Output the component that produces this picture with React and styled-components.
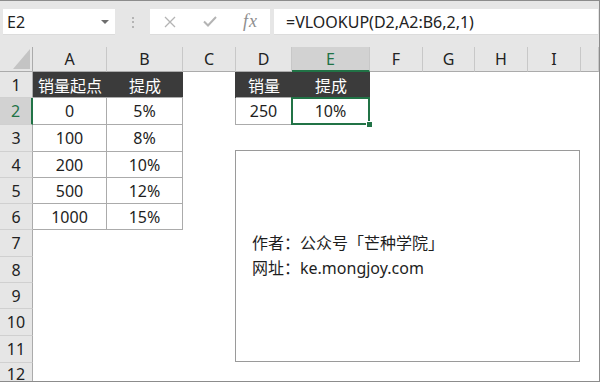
import React from 'react'
import styled, { createGlobalStyle, css } from 'styled-components'

const GlobalStyle = createGlobalStyle`
  html, body { margin:0; padding:0; background:#fff; }
  body { font-family: "Noto Sans", "Noto Sans CJK SC", sans-serif; }
  * { box-sizing: border-box; }
`

const letters = ['A', 'B', 'C', 'D', 'E', 'F', 'G', 'H', 'I', '']
const colWidths = '33px 74px 76px 53px 56px 78px 53px 52px 53px 53px 1fr'
const rowHeights = '25px 26px 27px 27px 26px 26px 26px 27px 26px 26px 27px 27px 1fr'

// row -> col -> [text, kind]
const data = {
  1: { A: ['销量起点', 'head'], B: ['提成', 'head'], D: ['销量', 'head'], E: ['提成', 'head'] },
  2: { A: ['0', 'box'], B: ['5%', 'box'], D: ['250', 'box'], E: ['10%', 'box'] },
  3: { A: ['100', 'box'], B: ['8%', 'box'] },
  4: { A: ['200', 'box'], B: ['10%', 'box'] },
  5: { A: ['500', 'box'], B: ['12%', 'box'] },
  6: { A: ['1000', 'box'], B: ['15%', 'box'] },
}

const green = '#217346'
const line = '#ababab'
const dark = '#3b3b3b'

const App = () => {
  const rows = Array.from({ length: 12 }, (_, i) => i + 1)
  return (
    <Frame>
      <GlobalStyle />
      <Toolbar>
        <NameBox>
          E2
          <Caret />
        </NameBox>
        <Grip>
          <Dot />
          <Dot />
          <Dot />
        </Grip>
        <FxButtons>
          <svg width="12" height="12" viewBox="0 0 12 12">
            <path d="M1 1L11 11M11 1L1 11" stroke="#b4b4b4" strokeWidth="1.3" fill="none" />
          </svg>
          <svg width="14" height="11" viewBox="0 0 14 11">
            <path d="M1 5.5L5 9.5L13 1" stroke="#b4b4b4" strokeWidth="2" fill="none" />
          </svg>
          <Fx>fx</Fx>
        </FxButtons>
        <FormulaInput>=VLOOKUP(D2,A2:B6,2,1)</FormulaInput>
      </Toolbar>
      <Sheet>
        <Corner>
          <svg width="17" height="20" viewBox="0 0 17 20">
            <path d="M17 0L17 20L0 20Z" fill="#c4c4c4" />
          </svg>
        </Corner>
        {letters.map((l, i) => (
          <ColHead key={i} $active={l === 'E'}>{l}</ColHead>
        ))}
        {rows.map((r) => (
          <React.Fragment key={r}>
            <RowHead $active={r === 2}>{r}</RowHead>
            {letters.map((l, i) => {
              const c = data[r] && data[r][l]
              return (
                <Cell
                  key={i}
                  $kind={c ? c[1] : undefined}
                  $edge={l === 'D' && !!c}
                  $selected={r === 2 && l === 'E'}
                >
                  {c ? c[0] : ''}
                </Cell>
              )
            })}
          </React.Fragment>
        ))}
        <TextBox>
          <div>作者：公众号「芒种学院」</div>
          <div>网址：ke.mongjoy.com</div>
        </TextBox>
      </Sheet>
    </Frame>
  )
}

export default App

const Frame = styled.div`
  width: 600px;
  height: 382px;
  overflow: hidden;
  display: flex;
  flex-direction: column;
  border-right: 1px solid #8c8c8c;
  border-bottom: 1px solid #8c8c8c;
  background: #fff;
`
const Toolbar = styled.div`
  height: 47px;
  flex: none;
  background: #e6e6e6;
  border-top: 1px solid #8c8c8c;
  display: flex;
  align-items: flex-start;
  padding: 8px 1px 0 3px;
`
const NameBox = styled.div`
  width: 112px;
  height: 26px;
  background: #fff;
  border-bottom: 1px solid #dcdcdc;
  display: flex;
  align-items: center;
  justify-content: space-between;
  padding: 0 6px 0 4px;
  font-size: 16px;
  color: #222;
`
const Caret = styled.span`
  width: 0;
  height: 0;
  border-left: 4px solid transparent;
  border-right: 4px solid transparent;
  border-top: 4px solid #6e6e6e;
`
const Grip = styled.div`
  width: 35px;
  height: 26px;
  display: flex;
  flex-direction: column;
  align-items: center;
  justify-content: center;
  gap: 2.5px;
`
const Dot = styled.span`
  width: 2px;
  height: 2px;
  background: #b4b4b4;
`
const FxButtons = styled.div`
  width: 120px;
  height: 26px;
  background: #fff;
  border-bottom: 1px solid #dcdcdc;
  display: flex;
  align-items: center;
  justify-content: space-between;
  padding: 0 12px 0 14px;
`
const Fx = styled.span`
  font-family: "Liberation Serif", serif;
  font-style: italic;
  font-size: 18px;
  color: #8e8e8e;
  letter-spacing: 1px;
`
const FormulaInput = styled.div`
  flex: 1;
  margin-left: 4px;
  height: 26px;
  background: #fff;
  border-bottom: 1px solid #dcdcdc;
  display: flex;
  align-items: center;
  padding-left: 12px;
  font-size: 16px;
  color: #222;
`
const Sheet = styled.div`
  flex: 1;
  position: relative;
  display: grid;
  grid-template-columns: ${colWidths};
  grid-template-rows: ${rowHeights};
  background: #fff;
`
const Corner = styled.div`
  background: #e6e6e6;
  border-right: 1px solid ${line};
  border-bottom: 1px solid ${line};
  display: flex;
  align-items: flex-end;
  justify-content: flex-end;
  padding: 0 2px 2px 0;
`
const ColHead = styled.div`
  background: ${(p) => (p.$active ? '#d2d2d2' : '#e6e6e6')};
  color: ${(p) => (p.$active ? green : '#222')};
  border-right: 1px solid #c8c8c8;
  border-bottom: ${(p) => (p.$active ? `2px solid ${green}` : `1px solid ${line}`)};
  display: flex;
  align-items: center;
  justify-content: center;
  font-size: 16px;
`
const RowHead = styled.div`
  background: ${(p) => (p.$active ? '#d2d2d2' : '#e6e6e6')};
  color: ${(p) => (p.$active ? green : '#222')};
  border-right: ${(p) => (p.$active ? `2px solid ${green}` : `1px solid ${line}`)};
  border-bottom: 1px solid #d0d0d0;
  display: flex;
  align-items: center;
  justify-content: center;
  font-size: 16px;
`
const Cell = styled.div`
  position: relative;
  display: flex;
  align-items: center;
  justify-content: center;
  font-size: 16px;
  color: #1e1e1e;
  white-space: nowrap;
  ${(p) =>
    p.$kind === 'box' &&
    css`
      border-right: 1px solid ${line};
      border-bottom: 1px solid ${line};
    `}
  ${(p) =>
    p.$kind === 'head' &&
    css`
      background: ${dark};
      color: #fff;
      border-bottom: 1px solid ${line};
    `}
  ${(p) =>
    p.$edge &&
    css`
      box-shadow: -1px 0 0 ${p.$kind === 'head' ? dark : line};
    `}
  ${(p) =>
    p.$selected &&
    css`
      z-index: 1;
      &::after {
        content: '';
        position: absolute;
        top: -1px;
        left: -1px;
        right: -1px;
        bottom: -1px;
        border: 2px solid ${green};
      }
      &::before {
        content: '';
        position: absolute;
        right: -3px;
        bottom: -3px;
        width: 5px;
        height: 5px;
        background: ${green};
        outline: 1px solid #fff;
        z-index: 2;
      }
    `}
`
const TextBox = styled.div`
  position: absolute;
  left: 235px;
  top: 103px;
  width: 345px;
  height: 212px;
  background: #fff;
  border: 1px solid #9a9a9a;
  display: flex;
  flex-direction: column;
  justify-content: center;
  padding-left: 16px;
  font-size: 16px;
  line-height: 25px;
  color: #1e1e1e;
  z-index: 2;
`
